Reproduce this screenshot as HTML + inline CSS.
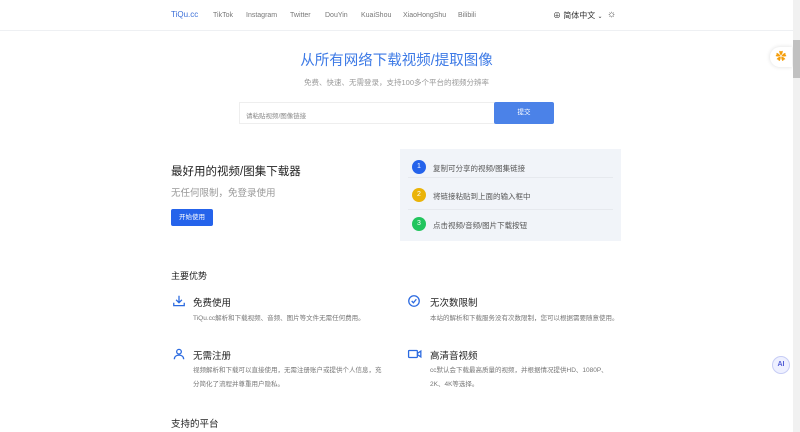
<!DOCTYPE html>
<html><head><meta charset="utf-8"><style>
*{margin:0;padding:0;box-sizing:border-box}
body{width:800px;height:432px;overflow:hidden;background:#fff;font-family:"Liberation Sans","Noto Sans CJK SC",sans-serif;position:relative;color:#333}
.a{position:absolute;white-space:nowrap}
.hdr{position:absolute;left:0;top:0;width:793px;height:31px;border-bottom:1px solid #eef0f3}
.nav{font-size:7px;color:#777;top:12px}
.sb{position:absolute;left:793px;top:0;width:7px;height:432px;background:#f1f1f1}
.th{position:absolute;left:793px;top:40px;width:7px;height:38px;background:#c1c1c1}
.c{width:14px;height:14px;border-radius:50%;color:#fff;font-size:7px;text-align:center;line-height:14px}
.st{font-size:7.5px;color:#555}
.ft{font-size:9.5px;color:#222}
.fd{font-size:6.5px;color:#777;line-height:14px}
</style></head><body>
<div class="hdr"></div>
<div class="a" style="left:171px;top:10px;font-size:8px;color:#3b6fd8">TiQu.cc</div>
<div class="a nav" style="left:213px">TikTok</div>
<div class="a nav" style="left:246px">Instagram</div>
<div class="a nav" style="left:290px">Twitter</div>
<div class="a nav" style="left:325px">DouYin</div>
<div class="a nav" style="left:361px">KuaiShou</div>
<div class="a nav" style="left:403px">XiaoHongShu</div>
<div class="a nav" style="left:458px">Bilibili</div>
<div class="a" style="left:553px;top:10px;font-size:8px;color:#333">⊕ 简体中文 <span style="font-size:6px">⌄</span></div>
<div class="a" style="left:607px;top:9px;font-size:10px;color:#444">☼</div>
<div class="a" style="left:0;width:793px;text-align:center;top:49px;font-size:14.5px;color:#3d7ae6">从所有网络下载视频/提取图像</div>
<div class="a" style="left:0;width:793px;text-align:center;top:77px;font-size:7.5px;color:#999">免费、快速、无需登录，支持100多个平台的视频分辨率</div>
<div class="a" style="left:239px;top:102px;width:256px;height:22px;border:1px solid #eee;border-right:none;font-size:6.5px;color:#888;padding:7px 6px">请粘贴视频/图像链接</div>
<div class="a" style="left:494px;top:102px;width:60px;height:22px;background:#4b82e8;border-radius:2px;color:#fff;font-size:6.5px;text-align:center;line-height:22px">提交</div>
<div class="a" style="left:171px;top:163px;font-size:11.5px;color:#222">最好用的视频/图集下载器</div>
<div class="a" style="left:171px;top:185px;font-size:9.5px;color:#999">无任何限制，免登录使用</div>
<div class="a" style="left:171px;top:209px;width:42px;height:17px;background:#2563eb;border-radius:2px;color:#fff;font-size:6.5px;text-align:center;line-height:17px">开始使用</div>
<div class="a" style="left:400px;top:149px;width:221px;height:92px;background:#f1f4f9"></div>
<div class="a" style="left:408px;top:177px;width:205px;border-top:1px solid #e6e9ee"></div>
<div class="a" style="left:408px;top:209px;width:205px;border-top:1px solid #e6e9ee"></div>
<div class="a c" style="left:412px;top:160px;background:#2563eb">1</div>
<div class="a c" style="left:412px;top:188px;background:#eab308">2</div>
<div class="a c" style="left:412px;top:217px;background:#22c55e">3</div>
<div class="a st" style="left:433px;top:163px">复制可分享的视频/图集链接</div>
<div class="a st" style="left:433px;top:191px">将链接粘贴到上面的输入框中</div>
<div class="a st" style="left:433px;top:220px">点击视频/音频/图片下载按钮</div>
<div class="a" style="left:171px;top:269px;font-size:9px;color:#222">主要优势</div>
<svg class="a" style="left:172px;top:294px" width="14" height="14" viewBox="0 0 24 24" fill="none" stroke="#2b6ae0" stroke-width="2.2"><path d="M12 3v12M7 10l5 5 5-5M3 15v5h18v-5"/></svg>
<div class="a ft" style="left:193px;top:295px">免费使用</div>
<div class="a fd" style="left:193px;top:312px">TiQu.cc解析和下载视频、音频、图片等文件无需任何费用。</div>
<svg class="a" style="left:407px;top:294px" width="14" height="14" viewBox="0 0 24 24" fill="none" stroke="#2b6ae0" stroke-width="2.2"><circle cx="12" cy="12" r="9"/><path d="M8 12l3 3 5-6"/></svg>
<div class="a ft" style="left:430px;top:295px">无次数限制</div>
<div class="a fd" style="left:430px;top:312px">本站的解析和下载服务没有次数限制，您可以根据需要随意使用。</div>
<svg class="a" style="left:172px;top:347px" width="14" height="14" viewBox="0 0 24 24" fill="none" stroke="#2b6ae0" stroke-width="2.2"><circle cx="12" cy="8" r="4"/><path d="M4 21c0-5 4-7 8-7s8 2 8 7"/></svg>
<div class="a ft" style="left:193px;top:348px">无需注册</div>
<div class="a fd" style="left:193px;top:364px">视频解析和下载可以直接使用，无需注册账户或提供个人信息，充<br>分简化了流程并尊重用户隐私。</div>
<svg class="a" style="left:407px;top:347px" width="16" height="14" viewBox="0 0 26 24" fill="none" stroke="#2b6ae0" stroke-width="2.2"><rect x="2" y="6" width="15" height="12" rx="1"/><path d="M17 11l6-4v10l-6-4"/></svg>
<div class="a ft" style="left:430px;top:348px">高清音视频</div>
<div class="a fd" style="left:430px;top:364px">cc默认会下载最高质量的视频，并根据情况提供HD、1080P、<br>2K、4K等选择。</div>
<div class="a" style="left:171px;top:416px;font-size:9.5px;color:#222">支持的平台</div>
<div class="a" style="left:770px;top:47px;width:22px;height:20px;background:#fff;border-radius:10px 0 0 10px;box-shadow:0 0 4px #ddd;color:#f59e0b;font-size:11px;text-align:center;line-height:20px">✿</div>
<div class="a" style="left:772px;top:356px;width:18px;height:18px;border-radius:50%;border:1px solid #c7cdf5;background:#eef0ff;color:#4f5bd5;font-size:7px;font-weight:bold;text-align:center;line-height:16px">AI</div>
<div class="sb"></div><div class="th"></div>
</body></html>
